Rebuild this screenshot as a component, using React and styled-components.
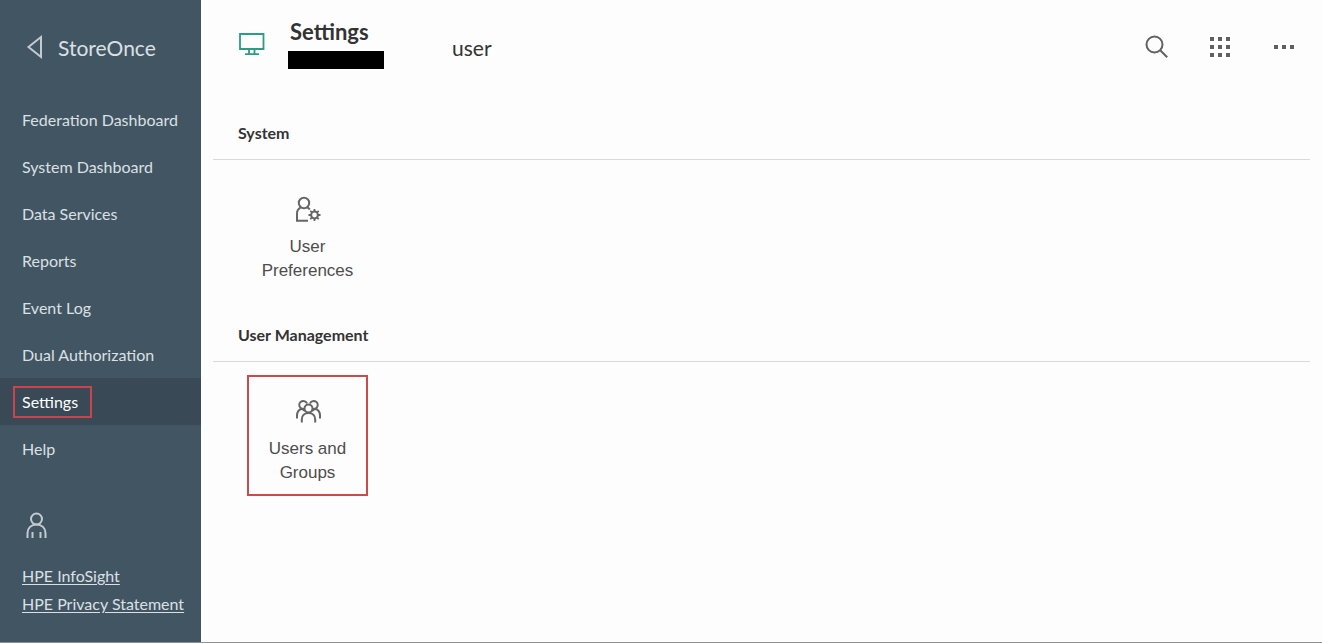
import styled, { createGlobalStyle } from 'styled-components';

const navItems = [
  'Federation Dashboard',
  'System Dashboard',
  'Data Services',
  'Reports',
  'Event Log',
  'Dual Authorization',
  'Settings',
  'Help',
];

const sections = [
  { title: 'System', tiles: [{ label: 'User Preferences', Icon: UserSettingsIcon }] },
  {
    title: 'User Management',
    tiles: [{ label: 'Users and Groups', Icon: GroupIcon, marked: true }],
  },
];

export default function App() {
  return (
    <>
      <GlobalStyle />
      <Page>
        <Sidebar>
          <Brand>
            <BackButton aria-label="Collapse menu">
              <BackIcon />
            </BackButton>
            <span>StoreOnce</span>
          </Brand>
          <Nav>
            {navItems.map((item) => {
              const active = item === 'Settings';
              return (
                <NavLink key={item} href="#" $active={active}>
                  <NavLabel $marked={active}>{item}</NavLabel>
                </NavLink>
              );
            })}
          </Nav>
          <UserButton aria-label="Session">
            <UserIcon />
          </UserButton>
          <FooterLinks>
            <a href="#">HPE InfoSight</a>
            <a href="#">HPE Privacy Statement</a>
          </FooterLinks>
        </Sidebar>
        <Main>
          <Header>
            <MonitorIcon />
            <TitleBlock>
              <h1>Settings</h1>
              <Redacted />
            </TitleBlock>
            <UserName>user</UserName>
            <Actions>
              <IconButton aria-label="Search">
                <SearchIcon />
              </IconButton>
              <IconButton aria-label="Applications">
                <DotsIcon rows={[3, 11, 19]} />
              </IconButton>
              <IconButton aria-label="More">
                <DotsIcon rows={[11]} />
              </IconButton>
            </Actions>
          </Header>
          {sections.map(({ title, tiles }) => (
            <section key={title}>
              <SectionTitle>{title}</SectionTitle>
              <Tiles>
                {tiles.map(({ label, Icon, marked }) => (
                  <Tile key={label} $marked={marked}>
                    <Icon />
                    {label}
                  </Tile>
                ))}
              </Tiles>
            </section>
          ))}
        </Main>
      </Page>
    </>
  );
}

function BackIcon() {
  return (
    <svg width="18" height="26" viewBox="0 0 18 26" fill="none">
      <path d="M15 3v20L2.500 13z" stroke="currentColor" strokeWidth="2" />
    </svg>
  );
}

function UserIcon() {
  return (
    <svg width="22" height="26" viewBox="0 0 22 26" fill="none">
      <g stroke="currentColor" strokeWidth="2">
        <circle cx="10.500" cy="7" r="5.500" />
        <path d="M1.500 26v-5c0-5 3.800-8.500 9-8.500s9 3.500 9 8.500v5M6.500 20v6M14.500 20v6" />
      </g>
    </svg>
  );
}

function MonitorIcon() {
  return (
    <svg width="26" height="24" viewBox="0 0 26 24" fill="none">
      <path
        d="M1 2h23.500v15H1zM10 17v5M15.500 17v5M6 22.200h14"
        stroke="#2a9d83"
        strokeWidth="1.800"
      />
    </svg>
  );
}

function SearchIcon() {
  return (
    <svg width="24" height="24" viewBox="0 0 24 24" fill="none">
      <g stroke="currentColor" strokeWidth="2">
        <circle cx="9.500" cy="9.500" r="8" />
        <path d="M15.200 15.200l7 7" />
      </g>
    </svg>
  );
}

function DotsIcon({ rows }) {
  return (
    <svg width="24" height="26" viewBox="0 0 24 26" fill="currentColor">
      {rows.map((y) =>
        [1, 9, 17].map((x) => <rect key={`${x}-${y}`} x={x} y={y} width="4" height="4" />)
      )}
    </svg>
  );
}

function UserSettingsIcon() {
  return (
    <svg width="26" height="26" viewBox="0 0 26 26" fill="none">
      <g stroke="currentColor" strokeWidth="2">
        <circle cx="9" cy="7" r="5.200" />
        <path d="M5.500 11.700C3 13 2 15 2 17.500v7.200h11M12.500 11.700c1 .4 1.700 1 2.300 1.800" />
        <circle cx="19.500" cy="19" r="3.400" />
        <path
          d="M19.500 13v3M19.500 22v3M13.500 19h3M22.500 19h3M15.300 14.800l2 2M21.700 21.200l2 2M15.300 23.200l2-2M21.700 16.800l2-2"
          strokeWidth="1.800"
        />
      </g>
    </svg>
  );
}

function GroupIcon() {
  return (
    <svg width="26" height="26" viewBox="0 0 26 26" fill="none">
      <g stroke="currentColor" strokeWidth="2">
        <circle cx="13.500" cy="10.500" r="4" />
        <path d="M6.800 24.500v-3c0-4 2.700-6.500 6.700-6.500s6.700 2.500 6.700 6.500v3" />
        <path d="M9.500 10.800A4 4 0 1 1 12 5.500M15 5.500a4 4 0 1 1 2.500 5.300" />
        <path d="M2 20.500v-3c0-3.500 2-5.800 5-6.700l3 2M25 20.500v-3c0-3.500-2-5.800-5-6.700l-3 2" />
      </g>
    </svg>
  );
}

const GlobalStyle = createGlobalStyle`
  * {
    box-sizing: border-box;
  }

  body {
    margin: 0;
    background: #fdfdfd;
    color: #333;
    font-family: Lato, sans-serif;
    font-size: 16px;
  }

  svg {
    display: block;
    flex-shrink: 0;
  }

  button {
    background: none;
    border: none;
    color: inherit;
    cursor: pointer;
    padding: 0;
  }
`;

const Page = styled.div`
  display: flex;
  min-height: 100vh;
  border-bottom: 1px solid #8f9295;
`;

const Sidebar = styled.aside`
  display: flex;
  flex-direction: column;
  flex: 0 0 201px;
  background: #425563;
  color: #dbe0e4;
`;

const Brand = styled.div`
  display: flex;
  align-items: center;
  gap: 14px;
  height: 94px;
  margin-bottom: 2px;
  padding-left: 26px;
  font-size: 21px;
`;

const BackButton = styled.button`
  color: #c3cad0;
`;

const Nav = styled.nav`
  display: flex;
  flex-direction: column;
`;

const NavLink = styled.a`
  display: flex;
  align-items: center;
  height: 47px;
  padding-left: 13px;
  background: ${({ $active }) => ($active ? '#394956' : 'none')};
  color: ${({ $active }) => ($active ? '#fff' : 'inherit')};
  text-decoration: none;
`;

const NavLabel = styled.span`
  padding: 4px 12px 4px 7px;
  border: 2px solid ${({ $marked }) => ($marked ? '#c9454b' : 'transparent')};
  line-height: 20px;
`;

const UserButton = styled.button`
  align-self: flex-start;
  margin: 40px 0 24px 26px;
  color: #c3cad0;
`;

const FooterLinks = styled.div`
  display: flex;
  flex-direction: column;
  align-items: flex-start;
  padding-left: 22px;
  line-height: 28px;

  a {
    color: inherit;
    text-underline-offset: 2px;
  }
`;

const Main = styled.main`
  flex: 1;
  padding: 0 12px;
`;

const Header = styled.header`
  display: flex;
  align-items: center;
  height: 94px;
  margin-bottom: 13px;
  padding: 0 13px 0 26px;

  > svg {
    margin-bottom: 6px;
  }
`;

const TitleBlock = styled.div`
  display: flex;
  flex-direction: column;
  gap: 5px;
  margin: 0 68px 8px 23px;

  h1 {
    margin: 0;
    padding-left: 2px;
    font-size: 22px;
    line-height: 28px;
  }
`;

const Redacted = styled.div`
  width: 96px;
  height: 18px;
  background: #000;
`;

const UserName = styled.span`
  font-size: 21px;
`;

const Actions = styled.div`
  display: flex;
  align-items: center;
  gap: 40px;
  margin-left: auto;
  color: #606060;
`;

const IconButton = styled.button`
  display: flex;
`;

const SectionTitle = styled.h2`
  margin: 0;
  padding-left: 25px;
  border-bottom: 1px solid #d9d9d9;
  font-size: 16px;
  line-height: 52px;
`;

const Tiles = styled.div`
  display: flex;
  flex-wrap: wrap;
  gap: 14px;
  padding: 13px 34px 15px;
`;

const Tile = styled.button`
  display: flex;
  flex-direction: column;
  align-items: center;
  gap: 13px;
  width: 121px;
  padding: 21px 8px 9px;
  border: 2px solid ${({ $marked }) => ($marked ? '#cb4a4a' : 'transparent')};
  color: #4d4d4d;
  font-family: 'Liberation Sans', Arial, sans-serif;
  font-size: 17px;
  line-height: 24px;

  svg {
    color: #666;
  }
`;
